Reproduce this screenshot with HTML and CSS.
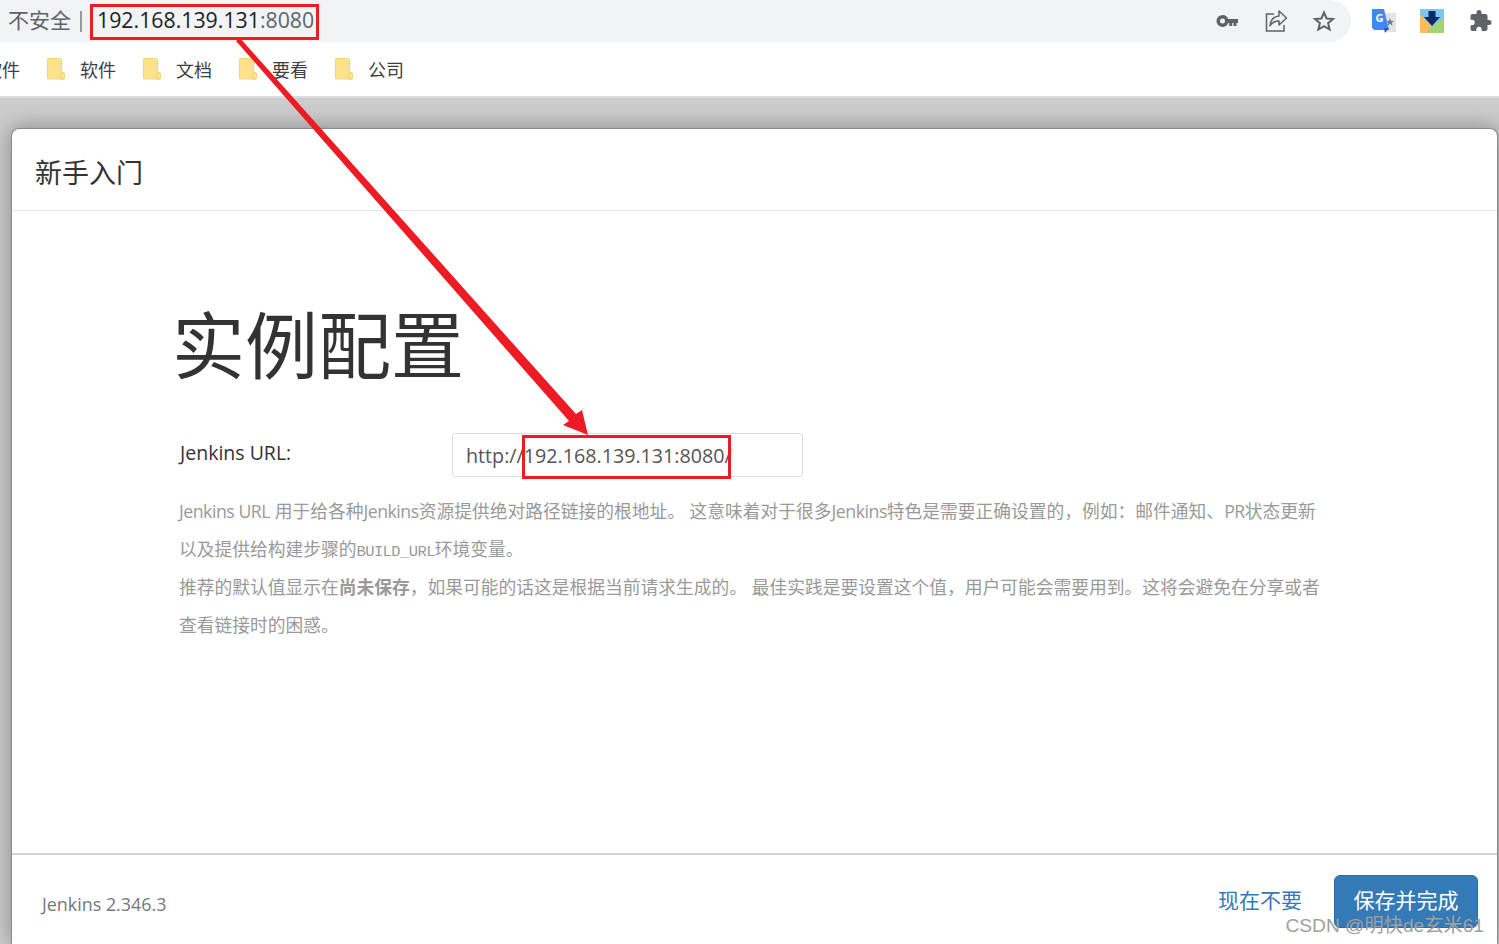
FILE: index.html
```html
<!DOCTYPE html>
<html lang="zh-CN">
<head>
    <meta charset="UTF-8">
    <title>新手入门 - Jenkins</title>
    <link rel="stylesheet" href="styles.css">
</head>
<body>
    <div class="toolbar">
        <div class="omnibox">
            <span class="not-secure">不安全</span>
            <span class="divider"></span>
            <span class="url">192.168.139.131<span class="port">:8080</span></span>
            <div class="omnibox-icons">
                <svg width="24" height="24" viewBox="0 0 24 24"><path fill="#5f6368" fill-rule="evenodd" d="M6.500 6a6 6 0 0 1 5.700 4H22v4h-1.500v3h-3v-3h-1.300v3h-3v-3h-1a6 6 0 1 1-5.700-8zm0 3.500a2.500 2.500 0 1 0 0 5 2.500 2.500 0 0 0 0-5z"/></svg>
                <svg width="24" height="24" viewBox="0 0 24 24" fill="none" stroke="#5f6368" stroke-width="1.500"><path d="M10 5H2.500v17H20v-6"/><path stroke-linejoin="round" d="M15 2l7.500 7-7.500 7v-4c-4.500 0-7 1.500-9 5 .5-5.500 3.500-9.500 9-10z"/></svg>
                <svg width="24" height="24" viewBox="0 0 24 24" fill="none" stroke="#5f6368" stroke-width="2"><path stroke-linejoin="miter" d="M12 3.500l2.600 6 6.400.5-4.900 4.200 1.500 6.300-5.600-3.400-5.600 3.400 1.500-6.300L3 10l6.400-.5z"/></svg>
            </div>
        </div>
        <div class="ext-icons">
            <svg width="24" height="24" viewBox="0 0 24 24">
                <rect x="12" y="4" width="12" height="19" fill="#e3e3e3"/>
                <path fill="#5f7f8c" d="M18 9l1 3 3 0-2.400 1.800 1 3-2.600-1.800-2.600 1.800 1-3L13.800 12l3 0z"/>
                <path fill="#4285f4" d="M0 0h12l5 21H2.500L0 19z"/>
                <path fill="#3b50b5" d="M12 19h5l-4 5z"/>
                <text class="g-letter" x="3.500" y="13">G</text>
            </svg>
            <svg width="24" height="24" viewBox="0 0 24 24">
                <rect width="24" height="24" fill="#7cc8ec"/>
                <path fill="#fdbc55" d="M0 6l12 11-6 7H0z"/>
                <path fill="#a4d46e" d="M24 9v15H7l6-7z"/>
                <path fill="#0b2a66" d="M8.500 2h7v6H20l-8 9-8-9h4.500z"/>
            </svg>
            <svg width="24" height="24" viewBox="0 0 24 24"><path fill="#5f6368" d="M21 11h-1.500V7a2 2 0 0 0-2-2h-4V3.500a2.500 2.500 0 0 0-5 0V5h-4a2 2 0 0 0-2 2v3.800H4a2.700 2.700 0 0 1 0 5.400H2.500V20a2 2 0 0 0 2 2h3.800v-1.500a2.700 2.700 0 0 1 5.400 0V22h3.800a2 2 0 0 0 2-2v-4H21a2.500 2.500 0 0 0 0-5z"/></svg>
        </div>
    </div>

    <div class="bookmarks">
        <span class="bookmark-cut">软件</span>
        <a class="bookmark"><svg class="folder" viewBox="0 0 18 22"><use href="#folder"/></svg>软件</a>
        <a class="bookmark"><svg class="folder" viewBox="0 0 18 22"><use href="#folder"/></svg>文档</a>
        <a class="bookmark"><svg class="folder" viewBox="0 0 18 22"><use href="#folder"/></svg>要看</a>
        <a class="bookmark"><svg class="folder" viewBox="0 0 18 22"><use href="#folder"/></svg>公司</a>
    </div>

    <div class="backdrop">
        <div class="modal">
            <div class="modal-header">新手入门</div>
            <div class="modal-body">
                <h1>实例配置</h1>
                <div class="url-row">
                    <label for="jenkinsUrl">Jenkins URL:</label>
                    <div class="url-input" id="jenkinsUrl">http://192.168.139.131:8080/</div>
                </div>
                <p class="help"><span class="latin">Jenkins URL</span> 用于给各种<span class="latin">Jenkins</span>资源提供绝对路径链接的根地址。 这意味着对于很多<span class="latin">Jenkins</span>特色是需要正确设置的，例如：邮件通知、<span class="latin">PR</span>状态更新<br>以及提供给构建步骤的<code>BUILD_URL</code>环境变量。<br>推荐的默认值显示在<strong>尚未保存</strong>，如果可能的话这是根据当前请求生成的。 最佳实践是要设置这个值，用户可能会需要用到。这将会避免在分享或者<br>查看链接时的困惑。</p>
            </div>
            <div class="modal-footer">
                <span class="version">Jenkins 2.346.3</span>
                <a class="skip">现在不要</a>
                <button type="button">保存并完成</button>
            </div>
        </div>
    </div>

    <!-- annotations drawn over the screenshot -->
    <div class="mark mark-address"></div>
    <div class="mark mark-input"></div>
    <svg class="arrow" width="1499" height="944" viewBox="0 0 1499 944"><polygon fill="#ed1c24" points="236,41 240,38 576,414 582,410 588,435 563,425 569,421"/></svg>
    <div class="watermark">CSDN @明快de玄米61</div>

    <svg width="0" height="0" class="defs">
        <symbol id="folder" viewBox="0 0 18 22">
            <path fill="#fde28e" stroke="#f8d568" d="M.5 1.500a1 1 0 0 1 1-1h11a2 2 0 0 1 2 2V21h-13a1 1 0 0 1-1-1z"/>
            <rect x="13.500" y="14.500" width="4" height="7" rx="1.500" fill="#fde28e" stroke="#f8d568"/>
        </symbol>
    </svg>
</body>
</html>
```

FILE: styles.css
```css
* {
    box-sizing: border-box;
}
body {
    margin: 0;
    height: 944px;
    overflow: hidden;
    display: flex;
    flex-direction: column;
    position: relative;
    background: #fff;
    font-family: "Open Sans", "Noto Sans CJK SC", sans-serif;
    color: #333;
}
.toolbar {
    height: 42px;
    display: flex;
    flex-shrink: 0;
}
.omnibox {
    width: 1351px;
    display: flex;
    align-items: center;
    padding-left: 8px;
    background: #f1f3f4;
    border-radius: 0 21px 21px 0;
}
.not-secure {
    font-size: 21px;
    line-height: 26px;
    margin-bottom: 2px;
    color: #5f6368;
}
.divider {
    width: 2px;
    height: 21px;
    margin: 0 15px 0 9px;
    background: #9a9a9a;
}
.url {
    font-size: 21.300px;
    line-height: 26px;
    margin-bottom: 2px;
    color: #202124;
    white-space: nowrap;
}
.port {
    color: #5f6368;
}
.omnibox-icons {
    margin-left: auto;
    margin-right: 15px;
    display: flex;
    gap: 24px;
}
.ext-icons {
    flex: 1;
    display: flex;
    gap: 24px;
    align-items: center;
    padding-left: 21px;
}
.g-letter {
    font: bold 11px "Open Sans", sans-serif;
    fill: #fff;
}
.bookmarks {
    height: 54px;
    flex-shrink: 0;
    display: flex;
    align-items: center;
    gap: 27px;
    font-size: 18px;
    color: #3c4043;
    margin-left: -16px;
}
.bookmark {
    display: flex;
    align-items: center;
    gap: 15px;
}
.folder {
    width: 18px;
    height: 22px;
}
.backdrop {
    flex: 1;
    min-height: 0;
    border-top: 2px solid #dcdcdc;
    padding: 30px 0 0 11px;
    background: #ccc;
    overflow: hidden;
}
.modal {
    height: 100%;
    display: flex;
    flex-direction: column;
    background: #fff;
    border: 1px solid #8a8a8a;
    border-bottom: 0;
    border-radius: 8px 8px 0 0;
    margin-right: 1px;
    box-shadow: 0 0 22px rgba(0, 0, 0, 0.35);
}
.modal-header {
    height: 82px;
    flex-shrink: 0;
    display: flex;
    align-items: center;
    padding: 3px 0 0 23px;
    font-size: 27px;
    border-bottom: 1px solid #e5e5e5;
}
.modal-body {
    flex: 1;
    padding: 90px 0 0 164px;
}
h1 {
    margin: 0 0 44px -4px;
    font-size: 73px;
    font-weight: 400;
    line-height: 88px;
}
.url-row {
    display: flex;
}
.url-row label {
    width: 276px;
    padding: 3px 0 0 4px;
    font-size: 19.500px;
    line-height: 34px;
}
.url-input {
    width: 351px;
    height: 44px;
    padding-left: 13px;
    font-size: 19.700px;
    line-height: 44px;
    color: #555;
    background: #fff;
    border: 1px solid #ddd;
    border-radius: 3px;
}
.help {
    margin: 15px 0 0 3px;
    font-size: 17.750px;
    line-height: 38px;
    color: #999;
    white-space: nowrap;
}
.help .latin {
    letter-spacing: -0.5px;
}
.help code {
    font-family: "Liberation Mono", monospace;
    font-size: 15.500px;
    letter-spacing: -0.6px;
    line-height: 1;
}
.modal-footer {
    height: 91px;
    flex-shrink: 0;
    display: flex;
    align-items: center;
    padding: 4px 19px 0 30px;
    border-top: 2px solid #d4d4d4;
}
.version {
    font-size: 17.900px;
    color: #777;
    margin: 4px auto 0 0;
}
.skip {
    font-size: 21px;
    color: #337ab7;
    margin: 0 32px 6px 0;
}
button {
    width: 144px;
    height: 53px;
    padding: 0 0 6px;
    font: 21px "Open Sans", "Noto Sans CJK SC", sans-serif;
    color: #fff;
    background: #337ab7;
    border: 1px solid #2e6da4;
    border-radius: 6px;
}
.mark {
    position: absolute;
    border: 3px solid #ed1c24;
}
.mark-address {
    left: 90px;
    top: 4px;
    width: 229px;
    height: 36px;
}
.mark-input {
    left: 522px;
    top: 435px;
    width: 209px;
    height: 44px;
}
.arrow {
    position: absolute;
    left: 0;
    top: 0;
}
.watermark {
    position: absolute;
    right: 15px;
    top: 914px;
    font-family: "Liberation Sans", "Noto Sans CJK SC", sans-serif;
    font-size: 19.200px;
    line-height: 24px;
    color: #a0a0a0;
}
.defs {
    position: absolute;
}
```
